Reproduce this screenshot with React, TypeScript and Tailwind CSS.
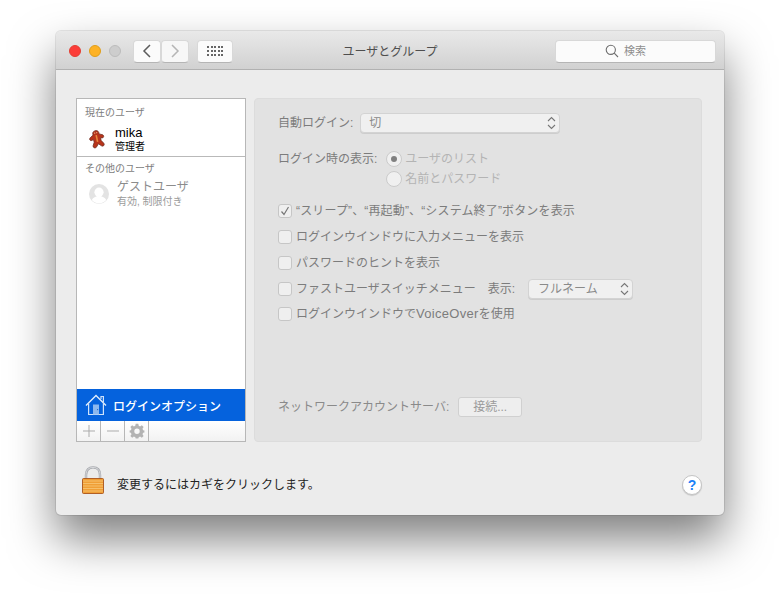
import type { ReactNode } from "react"

const font = "font-['Liberation_Sans','Noto_Sans_CJK_JP',sans-serif]"

function Chevrons() {
  return (
    <svg width="9" height="14" viewBox="0 0 9 14" fill="none" stroke="#777" strokeWidth="1.1">
      <path d="M1 5 L4.5 1.5 L8 5" />
      <path d="M1 9 L4.5 12.5 L8 9" />
    </svg>
  )
}

function Select({ label, className }: { label: string; className: string }) {
  return (
    <div className={`h-[20px] flex items-center justify-between rounded-[4px] bg-[#f0f0f0] border border-[#d3d3d3] shadow-[0_1px_0_#cdcdcd] text-[12px] text-[#8a8a8a] ${className}`}>
      <span>{label}</span>
      <Chevrons />
    </div>
  )
}

function Check({ label, checked, className = "" }: { label: ReactNode; checked?: boolean; className?: string }) {
  return (
    <div className={`flex items-center h-[20px] text-[12px] text-[#7c7c7c] whitespace-nowrap ${className}`}>
      <div className="w-[14px] h-[14px] rounded-[3px] bg-[#efefef] border border-[#c6c6c6] flex items-center justify-center mr-[4px] shrink-0">
        {checked && (
          <svg width="10" height="10" viewBox="0 0 10 10" fill="none" stroke="#777" strokeWidth="1.2">
            <path d="M1.5 5.5 L4 8.5 L8.5 1" />
          </svg>
        )}
      </div>
      <span>{label}</span>
    </div>
  )
}

function Radio({ label, on }: { label: string; on?: boolean }) {
  return (
    <div className="flex items-center h-[20px] text-[12px] text-[#b4b4b4]">
      <div className="w-[16px] h-[16px] rounded-full bg-[#f0f0f0] border border-[#cbcbcb] flex items-center justify-center mr-[3px]">
        {on && <div className="w-[6px] h-[6px] rounded-full bg-[#808080]" />}
      </div>
      {label}
    </div>
  )
}

function Gingerbread() {
  return (
    <svg width="20" height="20" viewBox="0 0 20 20">
      <g transform="rotate(-12 10 10)">
        <path
          d="M10 1.5 C12.4 1.5 13.6 3.4 13 5.4 L16.4 7 C17.8 8 17 10.4 15.2 10 L13.6 9.6 L13.8 12.4 L15.8 15.6 C16.6 17.6 14.4 19 13 17.6 L10.4 15 L7.6 18 C6 19 4 17.6 4.8 15.8 L6.6 12.6 L6.4 9.8 L4.6 10.4 C2.8 10.8 2 8.4 3.6 7.4 L7 5.4 C6.4 3.4 7.6 1.5 10 1.5 Z"
          fill="#b8341a"
          stroke="#6a2a20"
          strokeWidth="0.7"
        />
        <path d="M10 6 V13" stroke="#e8863c" strokeWidth="1.6" />
        <circle cx="9" cy="3.8" r="0.6" fill="#f0c89a" />
        <circle cx="11" cy="3.8" r="0.6" fill="#f0c89a" />
      </g>
    </svg>
  )
}

function Guest() {
  return (
    <svg width="20" height="20" viewBox="0 0 20 20">
      <circle cx="10" cy="10" r="10" fill="#e3e3e3" />
      <circle cx="10" cy="8.2" r="4.6" fill="#fff" />
      <path d="M2.8 16 C4 13.2 7 12.6 8.4 12 L11.6 12 C13 12.6 16 13.2 17.2 16 C13 20.5 7 20.5 2.8 16 Z" fill="#fff" />
    </svg>
  )
}

function House() {
  return (
    <svg width="22" height="22" viewBox="0 0 22 22" fill="none">
      <path d="M16 5 L16 2.5 L18.4 2.5 L18.4 8" stroke="#cfe2fa" strokeWidth="1.2" />
      <path d="M1 11.5 L11 1.5 L21 11.5" stroke="#e3eefc" strokeWidth="1.4" />
      <path d="M3.6 9.5 L3.6 20.5 L18.4 20.5 L18.4 9.5" stroke="#cfe2fa" strokeWidth="1.2" />
      <rect x="8" y="10.5" width="6" height="10" fill="#8db8ee" />
      <circle cx="12.6" cy="15.6" r="0.6" fill="#1e5fc0" />
    </svg>
  )
}

function Gear() {
  return (
    <svg width="16" height="16" viewBox="0 0 16 16">
      <path
        fill="#b3b3b3"
        fillRule="evenodd"
        d="M6.7 0.8 H9.3 L9.7 2.8 L11.1 3.4 L12.8 2.3 L14.6 4.1 L13.5 5.8 L14.1 7.2 L15.4 7.6 V9.4 L14.1 9.8 L13.5 11.2 L14.6 12.9 L12.8 14.7 L11.1 13.6 L9.7 14.2 L9.3 15.6 H6.7 L6.3 14.2 L4.9 13.6 L3.2 14.7 L1.4 12.9 L2.5 11.2 L1.9 9.8 L0.6 9.4 V7.6 L1.9 7.2 L2.5 5.8 L1.4 4.1 L3.2 2.3 L4.9 3.4 L6.3 2.8 Z M8 5.6 A2.7 2.7 0 1 0 8 11 A2.7 2.7 0 1 0 8 5.6 Z"
      />
    </svg>
  )
}

function Lock() {
  return (
    <svg width="22" height="28" viewBox="0 0 22 28" className="shrink-0">
      <path d="M4 13 V9 C4 4 6.8 1.4 11 1.4 C15.2 1.4 18 4 18 9 V13" fill="none" stroke="#a5a7ac" strokeWidth="2.4" />
      <path d="M4 13 V9 C4 4 6.8 1.4 11 1.4 C15.2 1.4 18 4 18 9 V13" fill="none" stroke="#e6e7ea" strokeWidth="0.8" />
      <rect x="0.5" y="12.5" width="21" height="15" rx="1" fill="#f09f36" stroke="#a9541a" strokeWidth="0.9" />
      <path d="M1 15 H21 M1 17.5 H21 M1 20 H21 M1 22.5 H21 M1 25 H21" stroke="#f8c878" strokeWidth="0.8" />
    </svg>
  )
}

export default function App() {
  return (
    <div className={`w-[780px] h-[595px] bg-white overflow-hidden pl-[56px] pt-[31px] ${font}`}>
      <div className="w-[668px] h-[484px] rounded-[5px] bg-[#ececec] overflow-hidden shadow-[0_0_0_1px_rgba(0,0,0,0.09),0_24px_46px_rgba(0,0,0,0.5)] flex flex-col">
        {/* Title bar */}
        <div className="h-[39px] shrink-0 bg-gradient-to-b from-[#e9e9e9] to-[#d1d1d1] border-b border-[#b1b1b1] flex items-center pt-[2px] pl-[13px] pr-[8px]">
          <div className="w-[12px] h-[12px] rounded-full bg-[#fc3d39] border border-[#e33e32]" />
          <div className="w-[12px] h-[12px] rounded-full bg-[#fdb225] border border-[#e09e1a] ml-[8px]" />
          <div className="w-[12px] h-[12px] rounded-full bg-[#cdcdcd] border border-[#bcbcbc] ml-[8px]" />
          <div className="ml-[12px] flex">
            <div className="w-[28px] h-[23px] bg-[#fbfbfb] rounded-[4px] border border-[#d8d8d8] border-b-[#b5b5b5] flex items-center justify-center">
              <svg width="10" height="14" viewBox="0 0 10 14" fill="none" stroke="#5c5c5c" strokeWidth="1.5"><path d="M8 1 L2 7 L8 13" /></svg>
            </div>
            <div className="w-[28px] h-[23px] bg-[#f7f7f7] rounded-[4px] border border-[#d8d8d8] border-b-[#b5b5b5] flex items-center justify-center">
              <svg width="10" height="14" viewBox="0 0 10 14" fill="none" stroke="#b5b5b5" strokeWidth="1.5"><path d="M2 1 L8 7 L2 13" /></svg>
            </div>
          </div>
          <div className="ml-[8px] w-[36px] h-[23px] bg-[#fbfbfb] rounded-[4px] border border-[#d8d8d8] border-b-[#b5b5b5] grid grid-cols-[repeat(5,2px)] gap-x-[1.5px] gap-y-[2px] content-center justify-center">
            {Array.from({ length: 15 }).map((_, i) => (
              <div key={i} className="w-[2px] h-[2px] bg-[#666]" />
            ))}
          </div>
          <div className="flex-1 text-center text-[12px] text-[#4e4e4e] pr-[8px] pt-[1px]">ユーザとグループ</div>
          <div className="w-[161px] h-[23px] bg-[#fbfbfb] rounded-[4px] border border-[#d8d8d8] border-b-[#b5b5b5] flex items-center justify-center pr-[20px] text-[11px] text-[#8e8e8e]">
            <svg width="14" height="14" viewBox="0 0 14 14" fill="none" stroke="#6e6e6e" strokeWidth="1.1" className="mr-[5px]">
              <circle cx="5.8" cy="5.8" r="4.6" />
              <path d="M9.2 9.2 L13 13" />
            </svg>
            <span className="pt-[1px]">検索</span>
          </div>
        </div>

        {/* Content */}
        <div className="flex-1 flex flex-col pl-[20px] pr-[22px] pt-[28px]">
          <div className="flex h-[344px]">
            {/* User list */}
            <div className="w-[170px] bg-white border border-[#b7b7b7] flex flex-col">
              <div className="h-[58px] border-b border-[#b9b9b9] flex flex-col">
                <div className="text-[10px] leading-[12px] text-[#7d7d7d] pl-[8px] pt-[8px]">現在のユーザ</div>
                <div className="flex items-center pl-[10px] mt-[6px]">
                  <Gingerbread />
                  <div className="ml-[8px]">
                    <div className="text-[13px] leading-[15px] text-black">mika</div>
                    <div className="text-[10px] leading-[13px] text-black">管理者</div>
                  </div>
                </div>
              </div>
              <div className="text-[10px] leading-[12px] text-[#7d7d7d] pl-[8px] pt-[6px]">その他のユーザ</div>
              <div className="flex items-center pl-[12px] mt-[4px]">
                <Guest />
                <div className="ml-[8px]">
                  <div className="text-[12px] leading-[16px] text-[#8c8c8c]">ゲストユーザ</div>
                  <div className="text-[10px] leading-[13px] text-[#9a9a9a]">有効, 制限付き</div>
                </div>
              </div>
              <div className="flex-1" />
              <div className="h-[32px] bg-[#0562dd] flex items-center pl-[8px] text-[12px] font-medium text-white">
                <House />
                <span className="ml-[6px] pt-[3px]">ログインオプション</span>
              </div>
              <div className="h-[20px] bg-gradient-to-b from-white to-[#f2f2f2] flex text-[#a9a9a9]">
                <div className="w-[24px] border-r border-[#b7b7b7] flex items-center justify-center">
                  <svg width="12" height="12" viewBox="0 0 12 12" stroke="#ababab" strokeWidth="1"><path d="M6 0 V12 M0 6 H12" /></svg>
                </div>
                <div className="w-[24px] border-r border-[#b7b7b7] flex items-center justify-center">
                  <svg width="12" height="12" viewBox="0 0 12 12" stroke="#ababab" strokeWidth="1"><path d="M0 6 H12" /></svg>
                </div>
                <div className="w-[24px] border-r border-[#b7b7b7] flex items-center justify-center">
                  <Gear />
                </div>
              </div>
            </div>

            {/* Options panel */}
            <div className="ml-[8px] flex-1 bg-[#e2e2e2] rounded-[4px] border border-[#dcdcdc] pl-[23px] pt-[14px] flex flex-col">
              <div className="flex items-center h-[20px] text-[12px] text-[#7c7c7c]">
                <span>自動ログイン:</span>
                <Select label="切" className="w-[200px] ml-[7px] pl-[8px] pr-[3px]" />
              </div>
              <div className="flex mt-[17px]">
                <span className="text-[12px] leading-[20px] text-[#7c7c7c] mt-[-1px]">ログイン時の表示:</span>
                <div className="ml-[9px] flex flex-col mt-[-1px]">
                  <Radio label="ユーザのリスト" on />
                  <Radio label="名前とパスワード" />
                </div>
              </div>
              <Check label={<span className="tracking-[0.15px]">“スリープ”、“再起動”、“システム終了”ボタンを表示</span>} checked className="mt-[12px]" />
              <Check label="ログインウインドウに入力メニューを表示" className="mt-[6px]" />
              <Check label="パスワードのヒントを表示" className="mt-[6px]" />
              <div className="flex items-center mt-[6px] text-[12px] text-[#7c7c7c]">
                <Check label="ファストユーザスイッチメニュー" />
                <span className="ml-[12px]">表示:</span>
                <Select label="フルネーム" className="w-[105px] ml-[13px] pl-[9px] pr-[3px]" />
              </div>
              <Check label={<>ログインウインドウで<span className="text-[13px] tracking-[0.3px]">VoiceOver</span>を使用</>} className="mt-[5px]" />
              <div className="flex items-center mt-[73px] text-[12px] text-[#8a8a8a]">
                <span>ネットワークアカウントサーバ:</span>
                <div className="ml-[9px] w-[64px] h-[20px] rounded-[3px] bg-[#eeeeee] border border-[#d0d0d0] flex items-center justify-center text-[#9b9b9b]">
                  接続...
                </div>
              </div>
            </div>
          </div>

          {/* Bottom bar */}
          <div className="flex items-start mt-[24px] pl-[6px]">
            <Lock />
            <span className="ml-[13px] mt-[10px] text-[12px] leading-[18px] text-[#222]">変更するにはカギをクリックします。</span>
            <div className="ml-auto mt-[9px] w-[20px] h-[20px] rounded-full bg-white border border-[#c4c4c4] shadow-[0_1px_1px_rgba(0,0,0,0.15)] flex items-center justify-center text-[14px] font-bold text-[#1a82f7]">
              ?
            </div>
          </div>
        </div>
      </div>
    </div>
  )
}
